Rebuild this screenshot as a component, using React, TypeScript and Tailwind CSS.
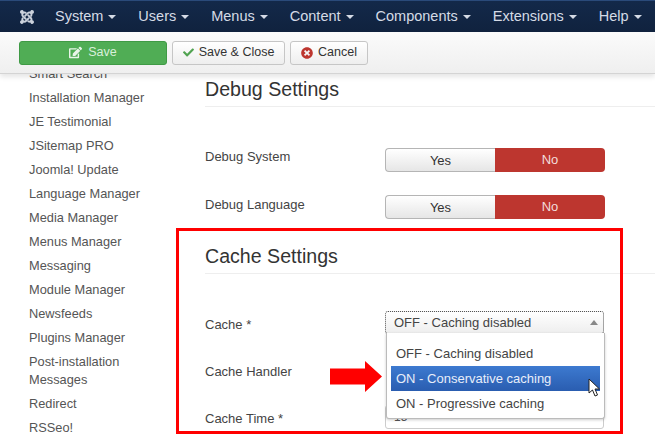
import { FaCheck, FaEdit, FaJoomla, FaTimesCircle } from 'react-icons/fa';

const menus = ['System', 'Users', 'Menus', 'Content', 'Components', 'Extensions', 'Help'];

const sidebar = [
  'Smart Search',
  'Installation Manager',
  'JE Testimonial',
  'JSitemap PRO',
  'Joomla! Update',
  'Language Manager',
  'Media Manager',
  'Menus Manager',
  'Messaging',
  'Module Manager',
  'Newsfeeds',
  'Plugins Manager',
  'Post-installation Messages',
  'Redirect',
  'RSSeo!',
];

const Toggle = () => (
  <div className="flex h-[24px] w-[220px] text-[13px] leading-[24px]">
    <div className="w-[110px] rounded-l-[4px] border border-r-0 border-[#b5b5b5] bg-gradient-to-b from-[#ffffff] to-[#e6e6e6] text-center leading-[24px] text-[#333333]">
      Yes
    </div>
    <div className="w-[110px] rounded-r-[4px] bg-[#bd362f] text-center text-[#f2dcdb]">No</div>
  </div>
);

const Row = ({ label, children, className }: { label: string; children?: React.ReactNode; className: string }) => (
  <div className={`flex items-start ${className}`}>
    <div className="w-[180px] text-[13px] leading-[18px] text-[#444444]">{label}</div>
    {children}
  </div>
);

const App = () => {
  return (
    <div className="relative flex h-[443px] w-[655px] flex-col overflow-hidden bg-white font-['Liberation_Sans',Arial,sans-serif]">
      <nav className="z-20 flex h-[32px] items-center border-t border-[#2a4a7a] bg-gradient-to-b from-[#13294a] to-[#10223e] pl-[19px] text-[14.5px] text-[#d5dbe6]">
        <FaJoomla className="mr-[20px] h-[16px] w-[16px] text-[#ccd2dc]" />
        <div className="flex gap-[22px]">
          {menus.map((m) => (
            <div key={m} className="flex items-center gap-[5px]">
              {m}
              <span className="mt-[1px] h-0 w-0 border-x-[4px] border-t-[4px] border-x-transparent border-t-[#d5dbe6]" />
            </div>
          ))}
        </div>
      </nav>

      <div className="z-10 flex h-[42px] items-center gap-[5px] border-b border-[#d4d4d4] bg-gradient-to-b from-[#fbfbfb] to-[#efefef] pl-[19px] text-[12.5px] shadow-[0_3px_5px_rgba(0,0,0,0.1)]">
        <button className="flex h-[24px] w-[148px] items-center justify-center gap-[6px] rounded-[3px] border border-[#3f9a45] bg-[#50ad55] text-[#d9efda]">
          <FaEdit className="h-[13px] w-[13px] text-[#e8f5e9]" />
          Save
        </button>
        <button className="flex h-[24px] w-[113px] items-center justify-center gap-[5px] rounded-[3px] border border-[#c6c6c6] bg-gradient-to-b from-[#ffffff] to-[#eeeeee] text-[#333333]">
          <FaCheck className="h-[11px] w-[11px] text-[#51a351]" />
          Save &amp; Close
        </button>
        <button className="flex h-[24px] w-[78px] items-center justify-center gap-[5px] rounded-[3px] border border-[#c6c6c6] bg-gradient-to-b from-[#ffffff] to-[#eeeeee] text-[#333333]">
          <FaTimesCircle className="h-[12px] w-[12px] text-[#bd362f]" />
          Cancel
        </button>
      </div>

      <div className="flex flex-1">
        <aside className="-mt-[12px] w-[205px] shrink-0 pl-[29px] text-[12.8px] text-[#555555]">
          {sidebar.map((s) => (
            <div key={s} className="w-[125px] py-[3px] leading-[18px]">
              {s}
            </div>
          ))}
        </aside>

        <main className="min-w-0 flex-1 pt-[3px] text-[#333333]">
          <h2 className="h-[30px] border-b border-[#eeeeee] text-[19.6px] leading-[24px] text-[#333333]">Debug Settings</h2>
          <Row label="Debug System" className="mt-[41px]">
            <Toggle />
          </Row>
          <div className="mt-[23px] flex items-start">
            <div className="mt-[1px] w-[180px] text-[13px] leading-[18px] text-[#444444]">Debug Language</div>
            <Toggle />
          </div>
          <h2 className="mt-[25px] h-[30px] border-b border-[#eeeeee] text-[19.6px] leading-[24px] text-[#333333]">Cache Settings</h2>
          <div className="mt-[37px] flex items-start">
            <div className="mt-[5px] w-[180px] text-[13px] leading-[18px] text-[#444444]">Cache *</div>
            <div className="flex h-[23px] w-[219px] items-center justify-between rounded-[3px] border border-dotted border-[#555555] bg-gradient-to-b from-[#ffffff] to-[#eeeeee] pr-[5px] pl-[8px] text-[13px] text-[#444444]">
              <span className="mt-[1px]">OFF - Caching disabled</span>
              <span className="h-0 w-0 border-x-[4px] border-b-[5px] border-x-transparent border-b-[#888888]" />
            </div>
          </div>
          <Row label="Cache Handler" className="mt-[29px]" />
          <Row label="Cache Time *" className="mt-[29px]">
            <div className="-mt-[5px] h-[24px] w-[219px] rounded-[3px] border border-[#cccccc] pl-[8px] text-[12px] leading-[22px] text-[#555555]">15</div>
          </Row>
        </main>
      </div>

      {/* dropdown list */}
      <div className="absolute top-[333px] left-[386px] z-10 h-[86px] w-[219px] rounded-b-[3px] border-x border-b border-[#bbbbbb] bg-white px-[4px] pt-[8px] text-[13px] leading-[25px] text-[#444444] shadow-[0_1px_3px_rgba(0,0,0,0.2)]">
        <div className="pl-[5px]">OFF - Caching disabled</div>
        <div className="bg-gradient-to-b from-[#3d7ad0] to-[#2a5db0] pl-[5px] text-[#e8eefa]">ON - Conservative caching</div>
        <div className="pl-[5px]">ON - Progressive caching</div>
      </div>

      {/* annotations on top of the screenshot */}
      <div className="pointer-events-none absolute top-[228px] left-[176px] z-20 h-[206px] w-[447px] border-[3px] border-[#ff0000]" />
      <svg className="absolute top-[361px] left-[330px] z-20" width="53" height="31" viewBox="0 0 53 31">
        <path d="M0 7.5H35V0L52 15.5L35 31V23.5H0Z" fill="#ff0000" />
      </svg>
      <svg className="absolute top-[378px] left-[588px] z-20" width="13" height="20" viewBox="0 0 13 20">
        <path d="M1 1V15L4.5 12L7 18L9.5 17L7 11H11.5Z" fill="#ffffff" stroke="#222222" strokeWidth="1" />
      </svg>
    </div>
  );
};

export default App;
